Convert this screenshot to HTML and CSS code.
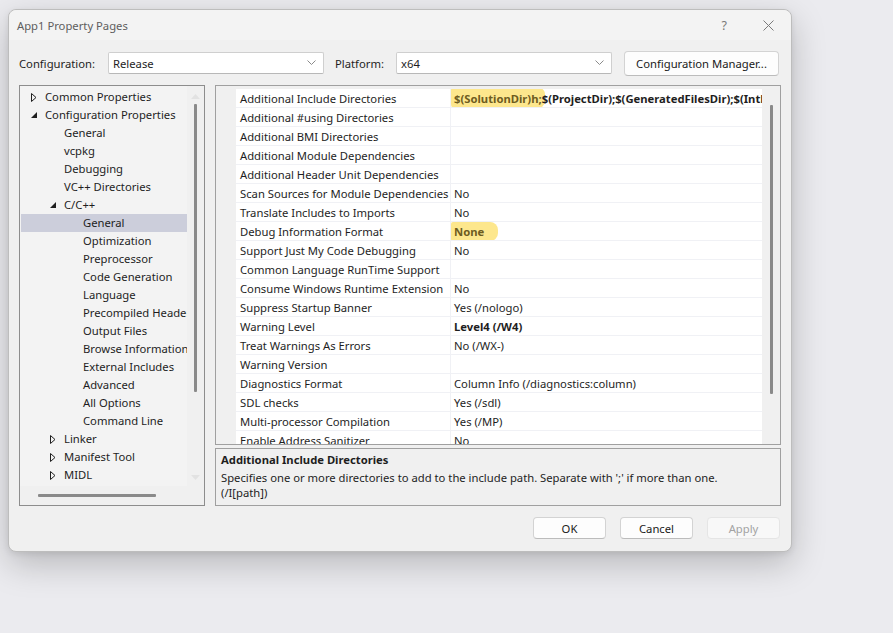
FILE: index.html
```html
<!DOCTYPE html>
<html>
<head>
<meta charset="utf-8">
<link rel="stylesheet" href="styles.css">
</head>
<body>
<div class="dialog">
  <div class="titlebar">
    <span class="title">App1 Property Pages</span>
    <span class="tb-help">?</span>
    <span class="tb-close"><svg width="11" height="11" viewBox="0 0 11 11"><path d="M0.5 0.5 L10.5 10.5 M10.5 0.5 L0.5 10.5" stroke="#7a7a7a" stroke-width="1" fill="none"/></svg></span>
  </div>

  <div class="config-row">
    <span class="lbl lbl-config">Configuration:</span>
    <div class="combo"><span>Release</span><svg class="chev" width="9" height="6" viewBox="0 0 9 6"><path d="M0.5 0.5 L4.5 4.5 L8.5 0.5" stroke="#8a8a8a" fill="none"/></svg></div>
    <span class="lbl lbl-platform">Platform:</span>
    <div class="combo"><span>x64</span><svg class="chev" width="9" height="6" viewBox="0 0 9 6"><path d="M0.5 0.5 L4.5 4.5 L8.5 0.5" stroke="#8a8a8a" fill="none"/></svg></div>
    <button class="btn btn-cm">Configuration Manager...</button>
  </div>

  <div class="main">
    <div class="tree">
      <div class="tree-body">
        <div class="tree-list">
          <div class="trow l0"><span class="tw"><svg width="6" height="9" viewBox="0 0 6 9"><path d="M0.5 0.5 L5 4.5 L0.5 8.5 Z" stroke="#1e1e1e" fill="none"/></svg></span>Common Properties</div>
          <div class="trow l0"><span class="tw"><svg width="7" height="7" viewBox="0 0 7 7"><path d="M6 0 L6 6 L0 6 Z" fill="#1e1e1e"/></svg></span>Configuration Properties</div>
          <div class="trow l1"><span class="tw"></span>General</div>
          <div class="trow l1"><span class="tw"></span>vcpkg</div>
          <div class="trow l1"><span class="tw"></span>Debugging</div>
          <div class="trow l1"><span class="tw"></span>VC++ Directories</div>
          <div class="trow l1"><span class="tw"><svg width="7" height="7" viewBox="0 0 7 7"><path d="M6 0 L6 6 L0 6 Z" fill="#1e1e1e"/></svg></span>C/C++</div>
          <div class="trow l2 sel"><span class="tw"></span>General</div>
          <div class="trow l2"><span class="tw"></span>Optimization</div>
          <div class="trow l2"><span class="tw"></span>Preprocessor</div>
          <div class="trow l2"><span class="tw"></span>Code Generation</div>
          <div class="trow l2"><span class="tw"></span>Language</div>
          <div class="trow l2"><span class="tw"></span>Precompiled Headers</div>
          <div class="trow l2"><span class="tw"></span>Output Files</div>
          <div class="trow l2"><span class="tw"></span>Browse Information</div>
          <div class="trow l2"><span class="tw"></span>External Includes</div>
          <div class="trow l2"><span class="tw"></span>Advanced</div>
          <div class="trow l2"><span class="tw"></span>All Options</div>
          <div class="trow l2"><span class="tw"></span>Command Line</div>
          <div class="trow l1"><span class="tw"><svg width="6" height="9" viewBox="0 0 6 9"><path d="M0.5 0.5 L5 4.5 L0.5 8.5 Z" stroke="#1e1e1e" fill="none"/></svg></span>Linker</div>
          <div class="trow l1"><span class="tw"><svg width="6" height="9" viewBox="0 0 6 9"><path d="M0.5 0.5 L5 4.5 L0.5 8.5 Z" stroke="#1e1e1e" fill="none"/></svg></span>Manifest Tool</div>
          <div class="trow l1"><span class="tw"><svg width="6" height="9" viewBox="0 0 6 9"><path d="M0.5 0.5 L5 4.5 L0.5 8.5 Z" stroke="#1e1e1e" fill="none"/></svg></span>MIDL</div>
        </div>
        <div class="vscroll tree-vscroll">
          <svg class="arrow" width="9" height="5" viewBox="0 0 9 5"><path d="M0 5 L4.5 0 L9 5 Z" fill="#e2e2e2"/></svg>
          <div class="vthumb tree-thumb"></div>
          <svg class="arrow" width="9" height="5" viewBox="0 0 9 5"><path d="M0 0 L4.5 5 L9 0 Z" fill="#e2e2e2"/></svg>
        </div>
      </div>
      <div class="hscroll"><div class="hthumb"></div></div>
    </div>

    <div class="right">
      <div class="grid">
        <div class="grid-rows">
          <div class="prow"><span class="gut"></span><span class="pname">Additional Include Directories</span><span class="pval bold"><span class="hl hl1">$(SolutionDir)h;</span>$(ProjectDir);$(GeneratedFilesDir);$(IntDir);%(AdditionalIncludeDirectories)</span></div>
          <div class="prow"><span class="gut"></span><span class="pname">Additional #using Directories</span><span class="pval"></span></div>
          <div class="prow"><span class="gut"></span><span class="pname">Additional BMI Directories</span><span class="pval"></span></div>
          <div class="prow"><span class="gut"></span><span class="pname">Additional Module Dependencies</span><span class="pval"></span></div>
          <div class="prow"><span class="gut"></span><span class="pname">Additional Header Unit Dependencies</span><span class="pval"></span></div>
          <div class="prow"><span class="gut"></span><span class="pname">Scan Sources for Module Dependencies</span><span class="pval">No</span></div>
          <div class="prow"><span class="gut"></span><span class="pname">Translate Includes to Imports</span><span class="pval">No</span></div>
          <div class="prow"><span class="gut"></span><span class="pname">Debug Information Format</span><span class="pval bold"><span class="hl hl2">None</span></span></div>
          <div class="prow"><span class="gut"></span><span class="pname">Support Just My Code Debugging</span><span class="pval">No</span></div>
          <div class="prow"><span class="gut"></span><span class="pname">Common Language RunTime Support</span><span class="pval"></span></div>
          <div class="prow"><span class="gut"></span><span class="pname">Consume Windows Runtime Extension</span><span class="pval">No</span></div>
          <div class="prow"><span class="gut"></span><span class="pname">Suppress Startup Banner</span><span class="pval">Yes (/nologo)</span></div>
          <div class="prow"><span class="gut"></span><span class="pname">Warning Level</span><span class="pval bold">Level4 (/W4)</span></div>
          <div class="prow"><span class="gut"></span><span class="pname">Treat Warnings As Errors</span><span class="pval">No (/WX-)</span></div>
          <div class="prow"><span class="gut"></span><span class="pname">Warning Version</span><span class="pval"></span></div>
          <div class="prow"><span class="gut"></span><span class="pname">Diagnostics Format</span><span class="pval">Column Info (/diagnostics:column)</span></div>
          <div class="prow"><span class="gut"></span><span class="pname">SDL checks</span><span class="pval">Yes (/sdl)</span></div>
          <div class="prow"><span class="gut"></span><span class="pname">Multi-processor Compilation</span><span class="pval">Yes (/MP)</span></div>
          <div class="prow"><span class="gut"></span><span class="pname">Enable Address Sanitizer</span><span class="pval">No</span></div>
        </div>
        <div class="vscroll grid-vscroll">
          <div class="vthumb grid-thumb"></div>
        </div>
      </div>
      <div class="desc">
        <div class="desc-title">Additional Include Directories</div>
        <div class="desc-text">Specifies one or more directories to add to the include path. Separate with ';' if more than one.<br>(/I[path])</div>
      </div>
    </div>
  </div>

  <div class="buttons">
    <button class="btn btn-dlg">OK</button>
    <button class="btn btn-dlg">Cancel</button>
    <button class="btn btn-dlg disabled">Apply</button>
  </div>
</div>
</body>
</html>
```

FILE: styles.css
```css
* { box-sizing: border-box; }

html, body {
  margin: 0;
  padding: 0;
}

body {
  background: #ebebef;
  width: 893px;
  height: 633px;
  overflow: hidden;
  font-family: "Noto Sans", "Open Sans", sans-serif;
  font-size: 11.25px;
  color: #1e1e1e;
}

.dialog {
  margin: 9px 0 0 8px;
  width: 784px;
  height: 543px;
  border: 1px solid #bdbdbd;
  border-radius: 8px;
  background: #f0f0f0;
  box-shadow: 0 12px 34px rgba(0, 0, 0, 0.22), 0 2px 6px rgba(0, 0, 0, 0.08);
  display: flex;
  flex-direction: column;
}

/* title bar */
.titlebar {
  height: 30px;
  flex: none;
  display: flex;
  align-items: center;
  padding-left: 8px;
  background: #f3f3f3;
  border-radius: 8px 8px 0 0;
}
.title {
  color: #5e5e5e;
  flex: 1;
}
.tb-help {
  color: #7a7a7a;
  font-size: 12.5px;
  margin-right: 36px;
}
.tb-close {
  display: flex;
  margin-right: 17px;
}

/* configuration row */
.config-row {
  flex: none;
  display: flex;
  align-items: center;
  height: 24px;
  margin-top: 11px;
  padding-left: 10px;
}
.lbl { flex: none; }
.lbl-config { width: 89px; }
.lbl-platform { width: 61px; margin-left: 11px; }
.combo {
  flex: none;
  width: 216px;
  height: 22px;
  background: #ffffff;
  border: 1px solid #cfcfcf;
  border-bottom-color: #b8b8b8;
  border-radius: 2px;
  display: flex;
  align-items: center;
  padding: 0 7px 0 4px;
}
.combo span { flex: 1; }
.chev { flex: none; }

.btn {
  font-family: "Noto Sans", "Open Sans", sans-serif;
  font-size: 11.25px;
  color: #1a1a1a;
  background: #fdfdfd;
  border: 1px solid #d3d3d3;
  border-bottom-color: #bcbcbc;
  border-radius: 4px;
  padding: 0;
  height: 24px;
}
.btn-cm {
  width: 155px;
  margin-left: 12px;
  height: 25px;
}

/* main area */
.main {
  flex: none;
  display: flex;
  gap: 10px;
  height: 421px;
  margin-top: 10px;
  padding-left: 10px;
}

/* tree */
.tree {
  width: 186px;
  flex: none;
  border: 1px solid #8d8d8d;
  display: flex;
  flex-direction: column;
  background: #f0f0f0;
}
.tree-body {
  flex: 1;
  display: flex;
  min-height: 0;
}
.tree-list {
  flex: 1;
  overflow: hidden;
  padding-top: 2px;
  background: #f3f3f3;
}
.trow {
  height: 18px;
  line-height: 18px;
  display: flex;
  align-items: center;
  white-space: nowrap;
  margin-left: 1px;
}
.trow.sel { background: #cccedb; }
.tw {
  flex: none;
  width: 14px;
  display: flex;
  align-items: center;
}
.l0 .tw { margin-left: 10px; }
.l1 .tw { margin-left: 29px; }
.l2 .tw { margin-left: 48px; }
.trow .tw svg { margin-top: 1px; }

.vscroll {
  flex: none;
  width: 17px;
  display: flex;
  flex-direction: column;
  align-items: center;
}
.tree-vscroll {
  background: #f0f0f0;
  padding: 8px 0 6px;
}
.vthumb {
  width: 3px;
  background: #8a8a8a;
  border-radius: 1px;
}
.tree-thumb {
  height: 288px;
  margin-top: 5px;
  flex: none;
}
.tree-vscroll .arrow:last-child { margin-top: auto; }

.hscroll {
  flex: none;
  height: 19px;
  display: flex;
  align-items: center;
  padding-left: 18px;
  background: #f0f0f0;
}
.hthumb {
  width: 118px;
  height: 3px;
  background: #8a8a8a;
  border-radius: 1px;
}

/* right side */
.right {
  width: 566px;
  flex: none;
  display: flex;
  flex-direction: column;
  gap: 3px;
}
.grid {
  height: 360px;
  flex: none;
  border: 1px solid #a0a0a0;
  display: flex;
  background: #f0f0f0;
  overflow: hidden;
}
.grid-rows {
  flex: 1;
  padding-top: 3px;
  overflow: hidden;
}
.prow {
  display: grid;
  grid-template-columns: 20px 215px 311px;
  height: 19px;
}
.gut { background: #f0f0f0; }
.pname, .pval {
  background: #ffffff;
  border-bottom: 1px solid #f0f1f5;
  line-height: 17px;
  padding-top: 1px;
  white-space: nowrap;
  overflow: hidden;
}
.pname {
  padding-left: 4px;
  border-right: 1px solid #f0f1f5;
}
.pval { padding-left: 3px; }
.bold { font-weight: bold; }

.hl {
  background: #fde78d;
  color: #6e5c1f;
}
.hl1 {
  padding: 3px 3px 4px 3px;
  margin-left: -3px;
  margin-right: -3px;
  border-radius: 2px 6px 10px 6px;
}
.hl2 {
  padding: 2px 14px 2px 3px;
  margin-left: -3px;
  border-radius: 2px 8px 8px 2px;
}

.grid-vscroll {
  width: 17px;
  background: #f0f0f0;
  padding-top: 19px;
}
.grid-thumb { height: 289px; }

/* description */
.desc {
  height: 58px;
  flex: none;
  border: 1px solid #a0a0a0;
  background: #f0f0f0;
  padding: 3px 5px;
}
.desc-title {
  font-weight: bold;
  line-height: 16px;
}
.desc-text {
  line-height: 15px;
  margin-top: 2px;
}

/* bottom buttons */
.buttons {
  flex: none;
  display: flex;
  justify-content: flex-end;
  gap: 14px;
  margin-top: 11px;
  padding-right: 11px;
}
.btn-dlg {
  width: 73px;
  height: 22px;
}
.btn-dlg.disabled {
  color: #a3a3a3;
  background: #f8f8f8;
  border-color: #e5e5e5;
}
```
